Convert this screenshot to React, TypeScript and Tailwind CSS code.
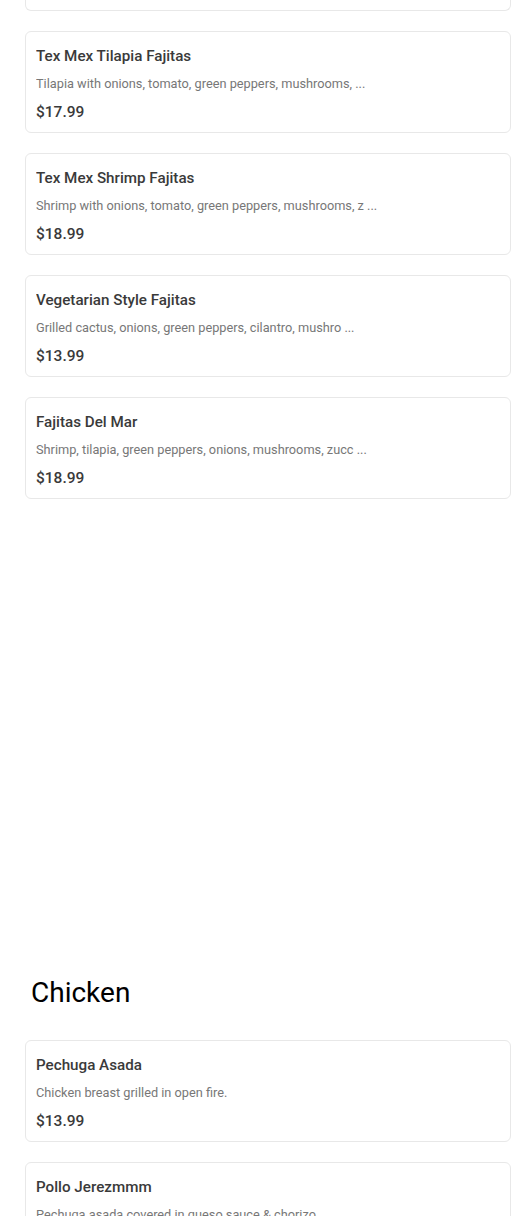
import React from 'react';

interface Item {
  name: string;
  description: string;
  price: string;
}

const fajitas: Item[] = [
  {
    name: 'Tex Mex Tilapia Fajitas',
    description: 'Tilapia with onions, tomato, green peppers, mushrooms, ...',
    price: '$17.99',
  },
  {
    name: 'Tex Mex Shrimp Fajitas',
    description: 'Shrimp with onions, tomato, green peppers, mushrooms, z ...',
    price: '$18.99',
  },
  {
    name: 'Vegetarian Style Fajitas',
    description: 'Grilled cactus, onions, green peppers, cilantro, mushro ...',
    price: '$13.99',
  },
  {
    name: 'Fajitas Del Mar',
    description: 'Shrimp, tilapia, green peppers, onions, mushrooms, zucc ...',
    price: '$18.99',
  },
];

const chicken: Item[] = [
  {
    name: 'Pechuga Asada',
    description: 'Chicken breast grilled in open fire.',
    price: '$13.99',
  },
  {
    name: 'Pollo Jerezmmm',
    description: 'Pechuga asada covered in queso sauce & chorizo.',
    price: '$14.99',
  },
];

function MenuCard({ item }: { item: Item }) {
  return (
    <div className="w-[486px] h-[102px] shrink-0 bg-white border border-[#e8e8e8] rounded-md px-[10px] pt-[13px] pb-[10px]">
      <h3 className="text-[15.2px] leading-[22px] font-medium text-[#3a3a3a] truncate">{item.name}</h3>
      <p className="mt-[7px] text-[12.75px] leading-[20px] text-[#777777] truncate">{item.description}</p>
      <p className="mt-[7px] text-[15.5px] leading-[22px] font-medium text-[#3a3a3a]">{item.price}</p>
    </div>
  );
}

export default function App() {
  return (
    <div
      className="w-[530px] h-[1216px] overflow-hidden bg-white"
      style={{ fontFamily: 'Roboto, "Noto Sans", sans-serif' }}
    >
      <div className="pl-[25px]">
        {/* tail of the card above the fold */}
        <div className="w-[486px] h-[11px] border-x border-b border-[#e8e8e8] rounded-b-md" />

        <div className="mt-[20px] flex flex-col gap-[20px]">
          {fajitas.map((item) => (
            <MenuCard key={item.name} item={item} />
          ))}
        </div>

        {/* Chicken */}
        <h2 className="mt-[476px] pl-[6px] text-[28px] leading-[36px] font-normal text-black">Chicken</h2>
        <div className="mt-[29px] flex flex-col gap-[20px]">
          {chicken.map((item) => (
            <MenuCard key={item.name} item={item} />
          ))}
        </div>
      </div>
    </div>
  );
}
